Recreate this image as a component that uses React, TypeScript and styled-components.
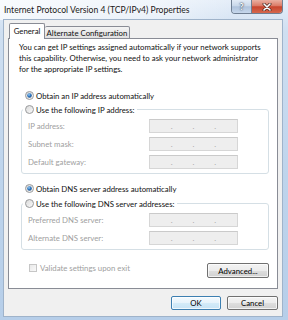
import React, { useId } from 'react';
import styled, { createGlobalStyle } from 'styled-components';

const TEXT = '7.8px';

const GlobalStyle = createGlobalStyle`
  html, body {
    margin: 0;
    padding: 0;
  }
  body {
    font-family: Lato, "Noto Sans", sans-serif;
  }
`;

const Window = styled.div`
  width: 288px;
  height: 320px;
  box-sizing: border-box;
  display: flex;
  flex-direction: column;
  overflow: hidden;
  background: linear-gradient(180deg, #e6eff9 0%, #cfdff1 10%, #bed4ec 55%, #b6cee9 100%);
  font-family: Lato, "Noto Sans", sans-serif;
  color: #111;
`;

const TitleBar = styled.div`
  height: 20px;
  flex: none;
  display: flex;
  justify-content: space-between;
  align-items: flex-start;
  padding: 0 5px 0 4px;
  background: linear-gradient(90deg, rgba(255, 255, 255, 0.75) 0%, rgba(255, 255, 255, 0.45) 55%, rgba(255, 255, 255, 0) 80%);
`;

const TitleText = styled.span`
  margin-top: 4px;
  font-size: 8.6px;
  line-height: 12px;
  color: #1a1a1a;
  white-space: nowrap;
  text-shadow: 0 0 4px #fff, 0 0 8px #fff;
`;

const CaptionGroup = styled.div`
  display: flex;
  height: 13px;
  border: 1px solid #6f7f93;
  border-top: none;
  border-radius: 0 0 4px 4px;
  overflow: hidden;
`;

const CaptionButton = styled.div<{ $kind: 'help' | 'close' }>`
  width: ${(p) => (p.$kind === 'close' ? 30 : 19)}px;
  display: flex;
  align-items: center;
  justify-content: center;
  border-right: ${(p) => (p.$kind === 'help' ? '1px solid #6f7f93' : 'none')};
  background: ${(p) =>
    p.$kind === 'close'
      ? 'linear-gradient(180deg, #eab0a2 0%, #db7a66 45%, #c8452e 52%, #d5684e 100%)'
      : 'linear-gradient(180deg, #e2ebf6 0%, #c9d8ea 45%, #afc3dc 52%, #c6d7ec 100%)'};
  font-size: 9px;
  font-weight: bold;
  color: #fff;
  text-shadow: 0 0 1px #2c3e55, 0 0 2px #2c3e55;
`;

const Client = styled.div`
  flex: 1;
  min-height: 0;
  margin: 0 6px 4px 4px;
  padding: 3px 4px 6px 4px;
  display: flex;
  flex-direction: column;
  background: #f0f0f0;
  box-shadow: 0 0 0 1px #9fb3ca;
`;

const TabRow = styled.div`
  position: relative;
  z-index: 1;
  display: flex;
  align-items: flex-end;
  height: 16px;
  margin-bottom: -1px;
  padding-left: 1px;
`;

const Tab = styled.div<{ $active?: boolean; $width: number }>`
  box-sizing: border-box;
  width: ${(p) => p.$width}px;
  height: ${(p) => (p.$active ? 16 : 13)}px;
  display: flex;
  align-items: center;
  justify-content: center;
  padding-bottom: ${(p) => (p.$active ? 2 : 0)}px;
  border: 1px solid #898c95;
  border-bottom: ${(p) => (p.$active ? 'none' : '1px solid #898c95')};
  border-left: ${(p) => (p.$active ? '1px solid #898c95' : 'none')};
  border-radius: 2px 2px 0 0;
  background: ${(p) => (p.$active ? '#fff' : 'linear-gradient(180deg, #f4f4f4 0%, #e9e9e9 50%, #e0e0e0 100%)')};
  font-size: ${TEXT};
  white-space: nowrap;
`;

const Panel = styled.div`
  flex: 1;
  min-height: 0;
  box-sizing: border-box;
  display: flex;
  flex-direction: column;
  padding: 0 8px 0 12px;
  border: 1px solid #898c95;
  background: #fff;
`;

const Intro = styled.p`
  margin: 3px 0 0 -2px;
  font-size: ${TEXT};
  line-height: 11px;
`;

const RadioLine = styled.label<{ $gap?: number }>`
  display: flex;
  align-items: center;
  gap: 2px;
  height: 11px;
  margin-top: ${(p) => p.$gap ?? 0}px;
  margin-left: 4px;
  font-size: ${TEXT};
  white-space: nowrap;
`;

const Group = styled.fieldset<{ $gap: number }>`
  margin: ${(p) => p.$gap}px 0 0;
  padding: 4px 0 4px 1px;
  min-width: 0;
  border: 1px solid #d5dfe5;
  border-radius: 3px;
  display: flex;
  flex-direction: column;
  gap: 4px;
`;

const Legend = styled.legend`
  padding: 0 2px;
  display: flex;
  align-items: center;
  gap: 2px;
  height: 11px;
  font-size: ${TEXT};
  white-space: nowrap;
`;

const FieldRow = styled.div`
  display: flex;
  align-items: center;
  height: 14px;
  margin-left: 5px;
`;

const FieldLabel = styled.span`
  width: 121px;
  font-size: ${TEXT};
  color: #a0a0a0;
`;

const IpBox = styled.div`
  box-sizing: border-box;
  width: 89px;
  height: 14px;
  display: flex;
  align-items: center;
  border: 1px solid #d6d6d6;
  border-top-color: #cacaca;
  background: #eeeeee;
  font-size: 8px;
  line-height: 12px;
  color: #a8a8a8;
`;

const Segment = styled.span`
  flex: 1;
`;

const Dot = styled.span`
  width: 0;
  display: flex;
  justify-content: center;
`;

const OptionsRow = styled.div`
  display: flex;
  justify-content: space-between;
  align-items: flex-start;
  margin-top: 13px;
`;

const CheckLabel = styled.label`
  display: flex;
  align-items: center;
  gap: 3px;
  height: 9px;
  margin-left: 8px;
  font-size: ${TEXT};
  color: #a0a0a0;
`;

const CheckBox = styled.span`
  box-sizing: border-box;
  width: 8px;
  height: 8px;
  border: 1px solid #c6c6c6;
  background: linear-gradient(135deg, #e9e9e9, #f9f9f9);
`;

const Button = styled.div<{ $width: number; $height?: number; $default?: boolean }>`
  box-sizing: border-box;
  width: ${(p) => p.$width}px;
  height: ${(p) => p.$height ?? 14}px;
  display: flex;
  align-items: center;
  justify-content: center;
  border: 1px solid ${(p) => (p.$default ? '#3c7fb1' : '#707070')};
  border-radius: 2px;
  background: ${(p) =>
    p.$default
      ? 'linear-gradient(180deg, #f4fafe 0%, #e6f3fb 50%, #d4ebf8 52%, #c6e3f5 100%)'
      : 'linear-gradient(180deg, #f3f3f3 0%, #ececec 50%, #dedede 52%, #d1d1d1 100%)'};
  box-shadow: inset 0 0 0 1px rgba(255, 255, 255, 0.7);
  font-size: ${TEXT};
  color: #000;
`;

const ButtonRow = styled.div`
  display: flex;
  justify-content: flex-end;
  gap: 6px;
  margin-top: 7px;
`;

const Radio = ({ checked }: { checked?: boolean }) => {
  const id = useId().replace(/:/g, '');
  return (
    <svg width="9" height="9" viewBox="0 0 9 9">
      <defs>
        <linearGradient id={`rf${id}`} x1="0" y1="0" x2="1" y2="1">
          <stop offset="0" stopColor="#d8d8d8" />
          <stop offset="1" stopColor="#fbfbfb" />
        </linearGradient>
        <radialGradient id={`rd${id}`} cx="0.4" cy="0.35" r="0.7">
          <stop offset="0" stopColor="#9fd0f5" />
          <stop offset="0.5" stopColor="#2f79c4" />
          <stop offset="1" stopColor="#1b4c86" />
        </radialGradient>
      </defs>
      <circle cx="4.5" cy="4.5" r="4" fill={`url(#rf${id})`} stroke="#9a9b9c" strokeWidth="1" />
      {checked && <circle cx="4.5" cy="4.5" r="2.3" fill={`url(#rd${id})`} />}
    </svg>
  );
};

const IpField = () => (
  <IpBox>
    <Segment />
    <Dot>.</Dot>
    <Segment />
    <Dot>.</Dot>
    <Segment />
    <Dot>.</Dot>
    <Segment />
  </IpBox>
);

const CloseGlyph = () => (
  <svg width="10" height="8" viewBox="0 0 10 8">
    <path d="M2 1 L8 7 M8 1 L2 7" stroke="#4a2a22" strokeWidth="3" strokeLinecap="round" />
    <path d="M2 1 L8 7 M8 1 L2 7" stroke="#fff" strokeWidth="1.6" strokeLinecap="round" />
  </svg>
);

const App = () => (
  <>
    <GlobalStyle />
    <Window>
      <TitleBar>
        <TitleText>Internet Protocol Version 4 (TCP/IPv4) Properties</TitleText>
        <CaptionGroup>
          <CaptionButton $kind="help">?</CaptionButton>
          <CaptionButton $kind="close">
            <CloseGlyph />
          </CaptionButton>
        </CaptionGroup>
      </TitleBar>
      <Client>
        <TabRow>
          <Tab $active $width={36}>General</Tab>
          <Tab $width={85}>Alternate Configuration</Tab>
        </TabRow>
        <Panel>
          <Intro>
            You can get IP settings assigned automatically if your network supports
            this capability. Otherwise, you need to ask your network administrator
            for the appropriate IP settings.
          </Intro>
          <RadioLine $gap={15}>
            <Radio checked />
            Obtain an IP address automatically
          </RadioLine>
          <Group $gap={3}>
            <Legend>
              <Radio />
              Use the following IP address:
            </Legend>
            <FieldRow>
              <FieldLabel>IP address:</FieldLabel>
              <IpField />
            </FieldRow>
            <FieldRow>
              <FieldLabel>Subnet mask:</FieldLabel>
              <IpField />
            </FieldRow>
            <FieldRow>
              <FieldLabel>Default gateway:</FieldLabel>
              <IpField />
            </FieldRow>
          </Group>
          <RadioLine $gap={9}>
            <Radio checked />
            Obtain DNS server address automatically
          </RadioLine>
          <Group $gap={4}>
            <Legend>
              <Radio />
              Use the following DNS server addresses:
            </Legend>
            <FieldRow>
              <FieldLabel>Preferred DNS server:</FieldLabel>
              <IpField />
            </FieldRow>
            <FieldRow>
              <FieldLabel>Alternate DNS server:</FieldLabel>
              <IpField />
            </FieldRow>
          </Group>
          <OptionsRow>
            <CheckLabel>
              <CheckBox />
              Validate settings upon exit
            </CheckLabel>
            <Button $width={62} $height={15}>Advanced...</Button>
          </OptionsRow>
        </Panel>
        <ButtonRow>
          <Button $width={50} $default>OK</Button>
          <Button $width={51}>Cancel</Button>
        </ButtonRow>
      </Client>
    </Window>
  </>
);

export default App;
